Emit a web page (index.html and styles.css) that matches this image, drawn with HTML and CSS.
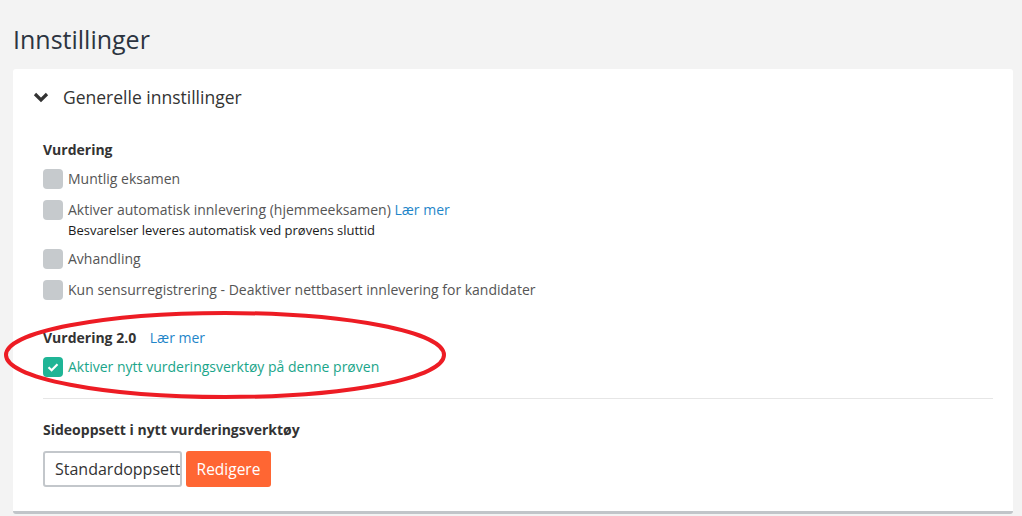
FILE: index.html
```html
<!DOCTYPE html>
<html lang="no">
<head>
    <meta charset="UTF-8">
    <title>Innstillinger</title>
    <link rel="stylesheet" href="styles.css">
</head>
<body>
    <h1 class="page-title">Innstillinger</h1>
    <div class="card">
        <div class="card-head">
            <svg class="chevron" width="16" height="12" viewBox="0 0 16 12"><path d="M2 3 L8 9 L14 3" fill="none" stroke="#333" stroke-width="3.2"/></svg>
            <span>Generelle innstillinger</span>
        </div>
        <div class="card-body">
            <h3 class="group-title">Vurdering</h3>
            <div class="check-row"><span class="box"></span><span>Muntlig eksamen</span></div>
            <div class="check-row with-sub">
                <span class="box"></span>
                <div>
                    <span>Aktiver automatisk innlevering (hjemmeeksamen) <a href="#">Lær mer</a></span>
                    <div class="sub">Besvarelser leveres automatisk ved prøvens sluttid</div>
                </div>
            </div>
            <div class="check-row"><span class="box"></span><span>Avhandling</span></div>
            <div class="check-row"><span class="box"></span><span>Kun sensurregistrering - Deaktiver nettbasert innlevering for kandidater</span></div>

            <h3 class="group-title v2">Vurdering 2.0 <a href="#">Lær mer</a></h3>
            <div class="check-row checked">
                <span class="box"><svg width="20" height="20" viewBox="0 0 20 20"><path d="M5.5 10.2 L8.6 13.2 L14.5 7.2" fill="none" stroke="#fff" stroke-width="2.2"/></svg></span>
                <span>Aktiver nytt vurderingsverktøy på denne prøven</span>
            </div>

            <hr class="divider">

            <h3 class="group-title">Sideoppsett i nytt vurderingsverktøy</h3>
            <div class="layout-row">
                <div class="select">Standardoppsett</div>
                <button class="btn">Redigere</button>
            </div>
        </div>
    </div>
    <svg class="mark" width="460" height="100" viewBox="0 0 460 100"><ellipse cx="225" cy="44" rx="219" ry="42" fill="none" stroke="#ed1c24" stroke-width="4"/></svg>
</body>
</html>
```

FILE: styles.css
```css
body {
    margin: 0;
    background: #f3f3f3;
    font-family: "Open Sans", sans-serif;
    color: #333;
    position: relative;
    height: 516px;
    overflow: hidden;
}
.page-title {
    margin: 0;
    padding: 23px 13px 0;
    font-size: 25px;
    font-weight: 400;
    line-height: 32px;
    color: #2c3440;
}
.card {
    margin: 14px 9px 0 13px;
    background: #fff;
    border-radius: 3px;
    border-bottom: 3px solid #c1c5c9;
    height: 445px;
    box-sizing: border-box;
}
.card-head {
    display: flex;
    align-items: center;
    height: 56px;
    padding-left: 20px;
    font-size: 17.5px;
    color: #333;
}
.chevron {
    margin-right: 14px;
}
.card-body {
    padding: 15px 20px 0 30px;
}
.group-title {
    margin: 0 0 9px;
    font-size: 14px;
    font-weight: 700;
    line-height: 20px;
    color: #333;
}
.group-title a {
    font-weight: 400;
    margin-left: 10px;
}
.group-title.v2 {
    margin-top: 28px;
}
a {
    color: #1f86c9;
    text-decoration: none;
}
.check-row {
    display: flex;
    align-items: flex-start;
    font-size: 14px;
    line-height: 20px;
    color: #555;
    margin-bottom: 11px;
}
.check-row.with-sub {
    margin-bottom: 9px;
}
.box {
    width: 20px;
    height: 20px;
    border-radius: 4px;
    background: #c6cacd;
    margin-right: 5px;
    flex-shrink: 0;
}
.sub {
    font-size: 13px;
    line-height: 20px;
    color: #1a1a1a;
}
.checked {
    color: #1aa58a;
}
.checked .box {
    background: #1fb596;
}
.divider {
    border: none;
    border-top: 1px solid #e6e6e6;
    margin: 21px 0 21px;
}
.layout-row {
    display: flex;
    gap: 4px;
    margin-top: 11px;
}
.select {
    width: 139px;
    height: 36px;
    box-sizing: border-box;
    border: 2px solid #c3c7cb;
    border-radius: 3px;
    font-size: 16px;
    line-height: 32px;
    padding-left: 10px;
    overflow: hidden;
    white-space: nowrap;
    color: #333;
}
.btn {
    width: 85px;
    height: 36px;
    border: none;
    border-radius: 3px;
    background: #ff6633;
    color: #fff;
    font-family: "Open Sans", sans-serif;
    font-size: 15.5px;
    padding: 0;
}
.mark {
    position: absolute;
    left: 0;
    top: 311px;
}
```
